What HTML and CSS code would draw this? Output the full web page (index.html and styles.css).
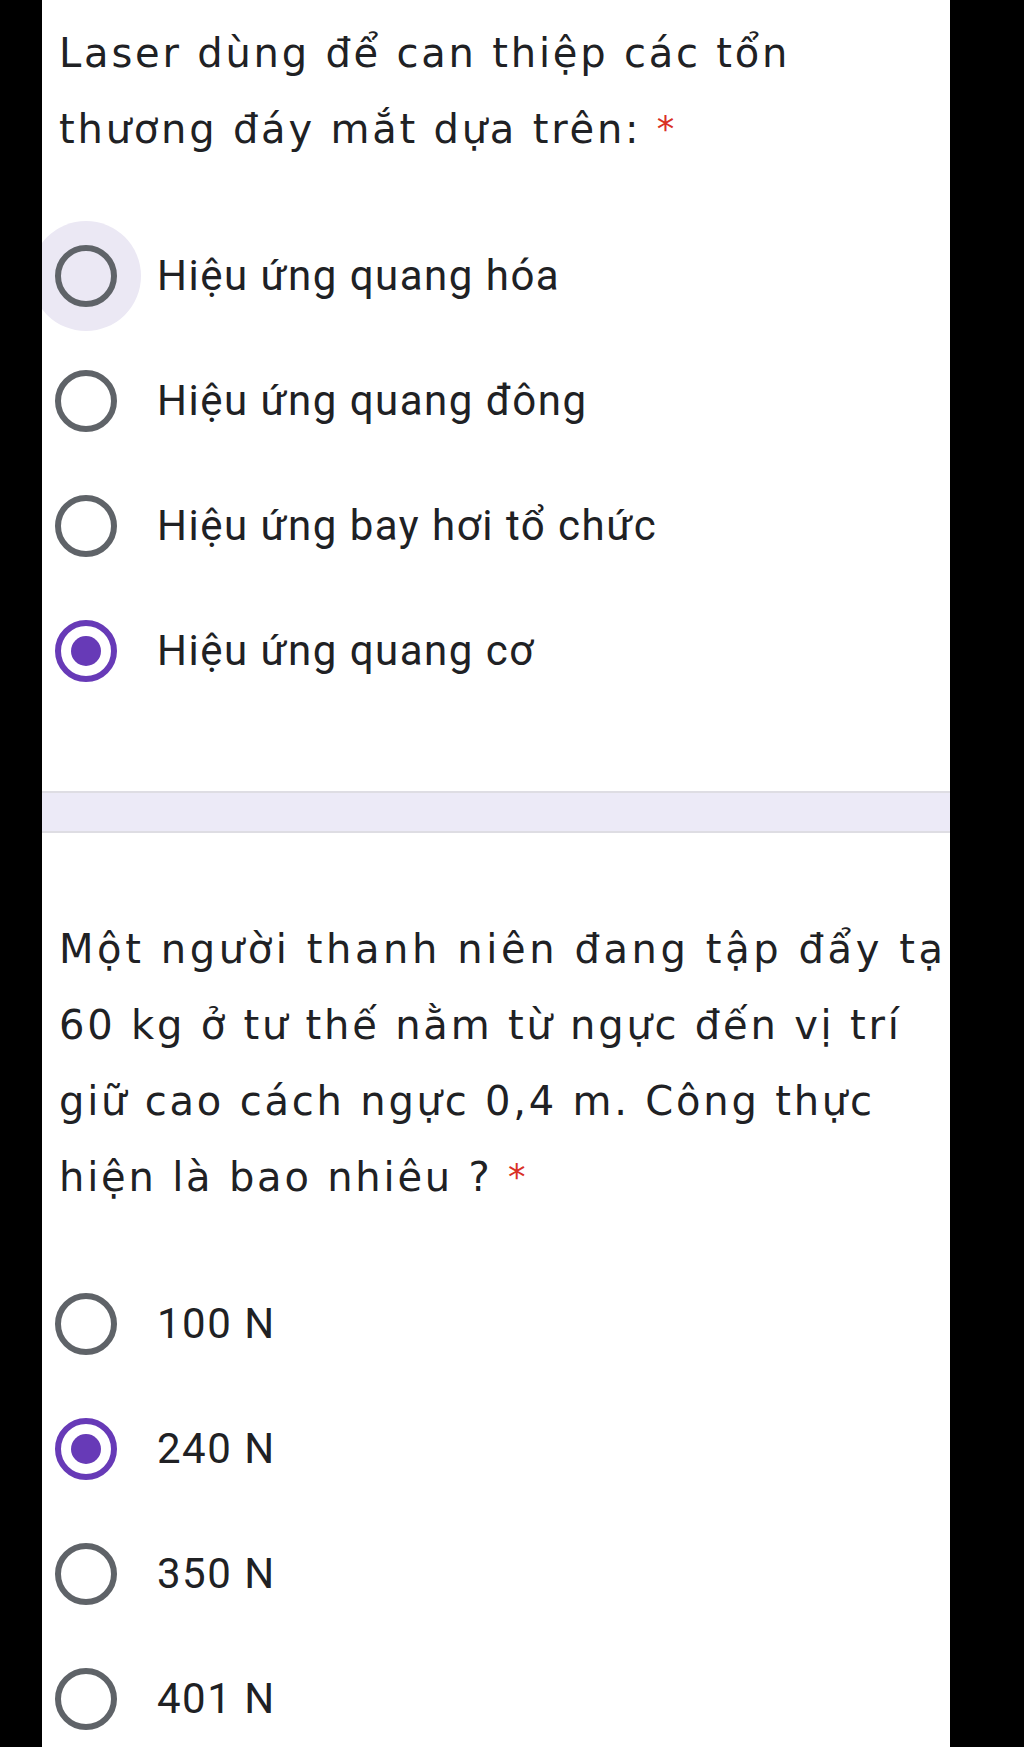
FILE: index.html
```html
<!DOCTYPE html>
<html lang="vi">
<head>
<meta charset="utf-8">
<title>Form</title>
<link rel="stylesheet" href="styles.css">
</head>
<body>
<div class="page">
  <section class="question first">
    <div class="q-title">Laser dùng để can thiệp các tổn<br>thương đáy mắt dựa trên: <span class="req">*</span></div>
    <div class="options">
      <div class="opt focused"><span class="radio"></span><span class="opt-text">Hiệu ứng quang hóa</span></div>
      <div class="opt"><span class="radio"></span><span class="opt-text">Hiệu ứng quang đông</span></div>
      <div class="opt"><span class="radio"></span><span class="opt-text">Hiệu ứng bay hơi tổ chức</span></div>
      <div class="opt"><span class="radio checked"></span><span class="opt-text">Hiệu ứng quang cơ</span></div>
    </div>
  </section>
  <div class="band"></div>
  <section class="question second">
    <div class="q-title"><span class="wide">Một người thanh niên đang tập đẩy tạ</span><br>60 kg ở tư thế nằm từ ngực đến vị trí<br>giữ cao cách ngực 0,4 m. Công thực<br>hiện là bao nhiêu ? <span class="req">*</span></div>
    <div class="options">
      <div class="opt"><span class="radio"></span><span class="opt-text">100 N</span></div>
      <div class="opt"><span class="radio checked"></span><span class="opt-text">240 N</span></div>
      <div class="opt"><span class="radio"></span><span class="opt-text">350 N</span></div>
      <div class="opt"><span class="radio"></span><span class="opt-text">401 N</span></div>
    </div>
  </section>
</div>
</body>
</html>
```
FILE: styles.css
```css
html, body {
  margin: 0;
  padding: 0;
  background: #000;
  height: 1747px;
  overflow: hidden;
}

.page {
  margin-left: 42px;
  width: 908px;
  min-height: 1747px;
  background: #fff;
  overflow: hidden;
}

.question.first {
  padding-top: 15px;
}

.question.second {
  padding-top: 78px;
}

.q-title {
  padding-left: 17px;
  font-family: "DejaVu Sans", "Open Sans", sans-serif;
  font-size: 40px;
  line-height: 76px;
  letter-spacing: 2.8px;
  color: #202124;
  white-space: nowrap;
}

.wide {
  letter-spacing: 3.6px;
}

.req {
  color: #d93025;
  letter-spacing: 0;
  font-size: 35px;
  vertical-align: 2px;
}

.options {
  margin-top: 46px;
  padding-left: 13px;
}

.opt {
  display: flex;
  align-items: center;
  gap: 40px;
  height: 125px;
}

.radio {
  flex: none;
  position: relative;
  box-sizing: border-box;
  width: 62px;
  height: 62px;
  border: 6px solid #5f6368;
  border-radius: 50%;
  background: #fff;
}

.focused .radio {
  background: #ebe8f4;
  box-shadow: 0 0 0 24px #ebe8f4;
}

.radio.checked {
  border-color: #673ab7;
}

.radio.checked::after {
  content: "";
  position: absolute;
  inset: 10px;
  border-radius: 50%;
  background: #673ab7;
}

.opt-text {
  font-family: Roboto, "Liberation Sans", sans-serif;
  font-size: 42px;
  letter-spacing: 1.5px;
  color: #202124;
  white-space: nowrap;
}

.band {
  margin-top: 78px;
  height: 38px;
  background: #eceaf7;
  border-top: 2px solid #dedde3;
  border-bottom: 2px solid #dedde3;
}
```
